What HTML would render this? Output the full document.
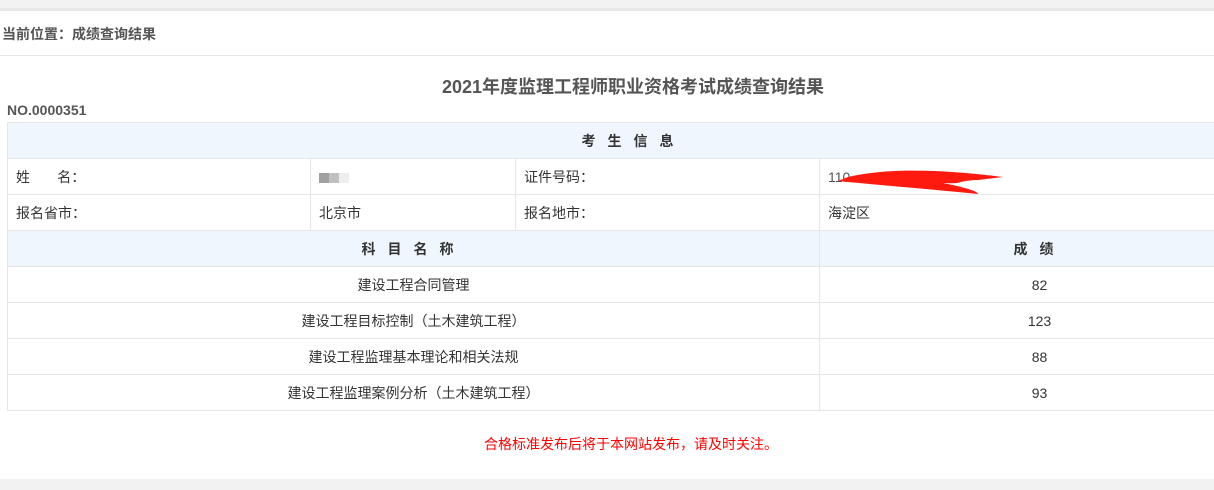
<!DOCTYPE html>
<html><head><meta charset="utf-8"><style>
*{margin:0;padding:0;box-sizing:border-box}
body{width:1214px;height:490px;overflow:hidden;background:#fff;font-family:"Liberation Sans","Noto Sans CJK SC",sans-serif;color:#333;position:relative}
.top{position:absolute;left:0;top:0;width:1214px;height:11px;background:#f2f2f2;border-bottom:3px solid #e6e6e6}
.bc{position:absolute;left:2px;top:24px;font-size:14px;font-weight:bold;color:#555}
.line{position:absolute;left:0;top:55px;width:1214px;height:1px;background:#e6e6e6}
.title{position:absolute;left:0;width:1266px;top:73px;text-align:center;font-size:18px;font-weight:bold;color:#555}
.no{position:absolute;left:7px;top:102px;font-size:14px;font-weight:bold;color:#555}
table{position:absolute;left:7px;top:122px;width:1252px;border-collapse:collapse;font-size:14px;table-layout:fixed}
td{border:1px solid #e6e6e6;height:36px;padding:0 8px;color:#333;white-space:nowrap;overflow:visible}
.h td{background:#f0f6fe;font-weight:bold;text-align:center;letter-spacing:12px}
.c{text-align:center}
.bottom{position:absolute;left:0;top:479px;width:1214px;height:11px;background:#f2f2f2}
.note{position:absolute;left:0;width:1262px;top:434px;text-align:center;color:#f00;font-size:14px}
.blur{display:inline-block;width:10px;height:10px;vertical-align:middle}
</style></head><body>
<div class="top"></div>
<div class="bc">当前位置：成绩查询结果</div>
<div class="line"></div>
<div class="title">2021年度监理工程师职业资格考试成绩查询结果</div>
<div class="no">NO.0000351</div>
<table>
<colgroup><col style="width:303px"><col style="width:205px"><col style="width:304px"><col style="width:440px"></colgroup>
<tr class="h"><td colspan="4">考生信息</td></tr>
<tr><td>姓&nbsp;&nbsp;&nbsp;&nbsp;&nbsp;&nbsp;&nbsp;名：</td><td><span class="blur" style="background:#a0a0a0"></span><span class="blur" style="background:#c0c0c0"></span><span class="blur" style="background:#eee"></span></td><td>证件号码：</td><td style="position:relative"><span style="color:#555">110</span><svg style="position:absolute;left:8px;top:6px" width="180" height="30"><path d="M20 12 C60 3 110 4 175 12 L150 15 C125 16 140 19 115 18 C135 22 150 26 150 29 C100 24 50 20 10 16 Z" fill="#ff1a10"/></svg></td></tr>
<tr><td>报名省市：</td><td>北京市</td><td>报名地市：</td><td>海淀区</td></tr>
<tr class="h"><td colspan="3">科目名称</td><td>成绩</td></tr>
<tr><td colspan="3" class="c">建设工程合同管理</td><td class="c">82</td></tr>
<tr><td colspan="3" class="c">建设工程目标控制（土木建筑工程）</td><td class="c">123</td></tr>
<tr><td colspan="3" class="c">建设工程监理基本理论和相关法规</td><td class="c">88</td></tr>
<tr><td colspan="3" class="c">建设工程监理案例分析（土木建筑工程）</td><td class="c">93</td></tr>
</table>
<div class="note">合格标准发布后将于本网站发布，请及时关注。</div>
<div class="bottom"></div>
</body></html>
